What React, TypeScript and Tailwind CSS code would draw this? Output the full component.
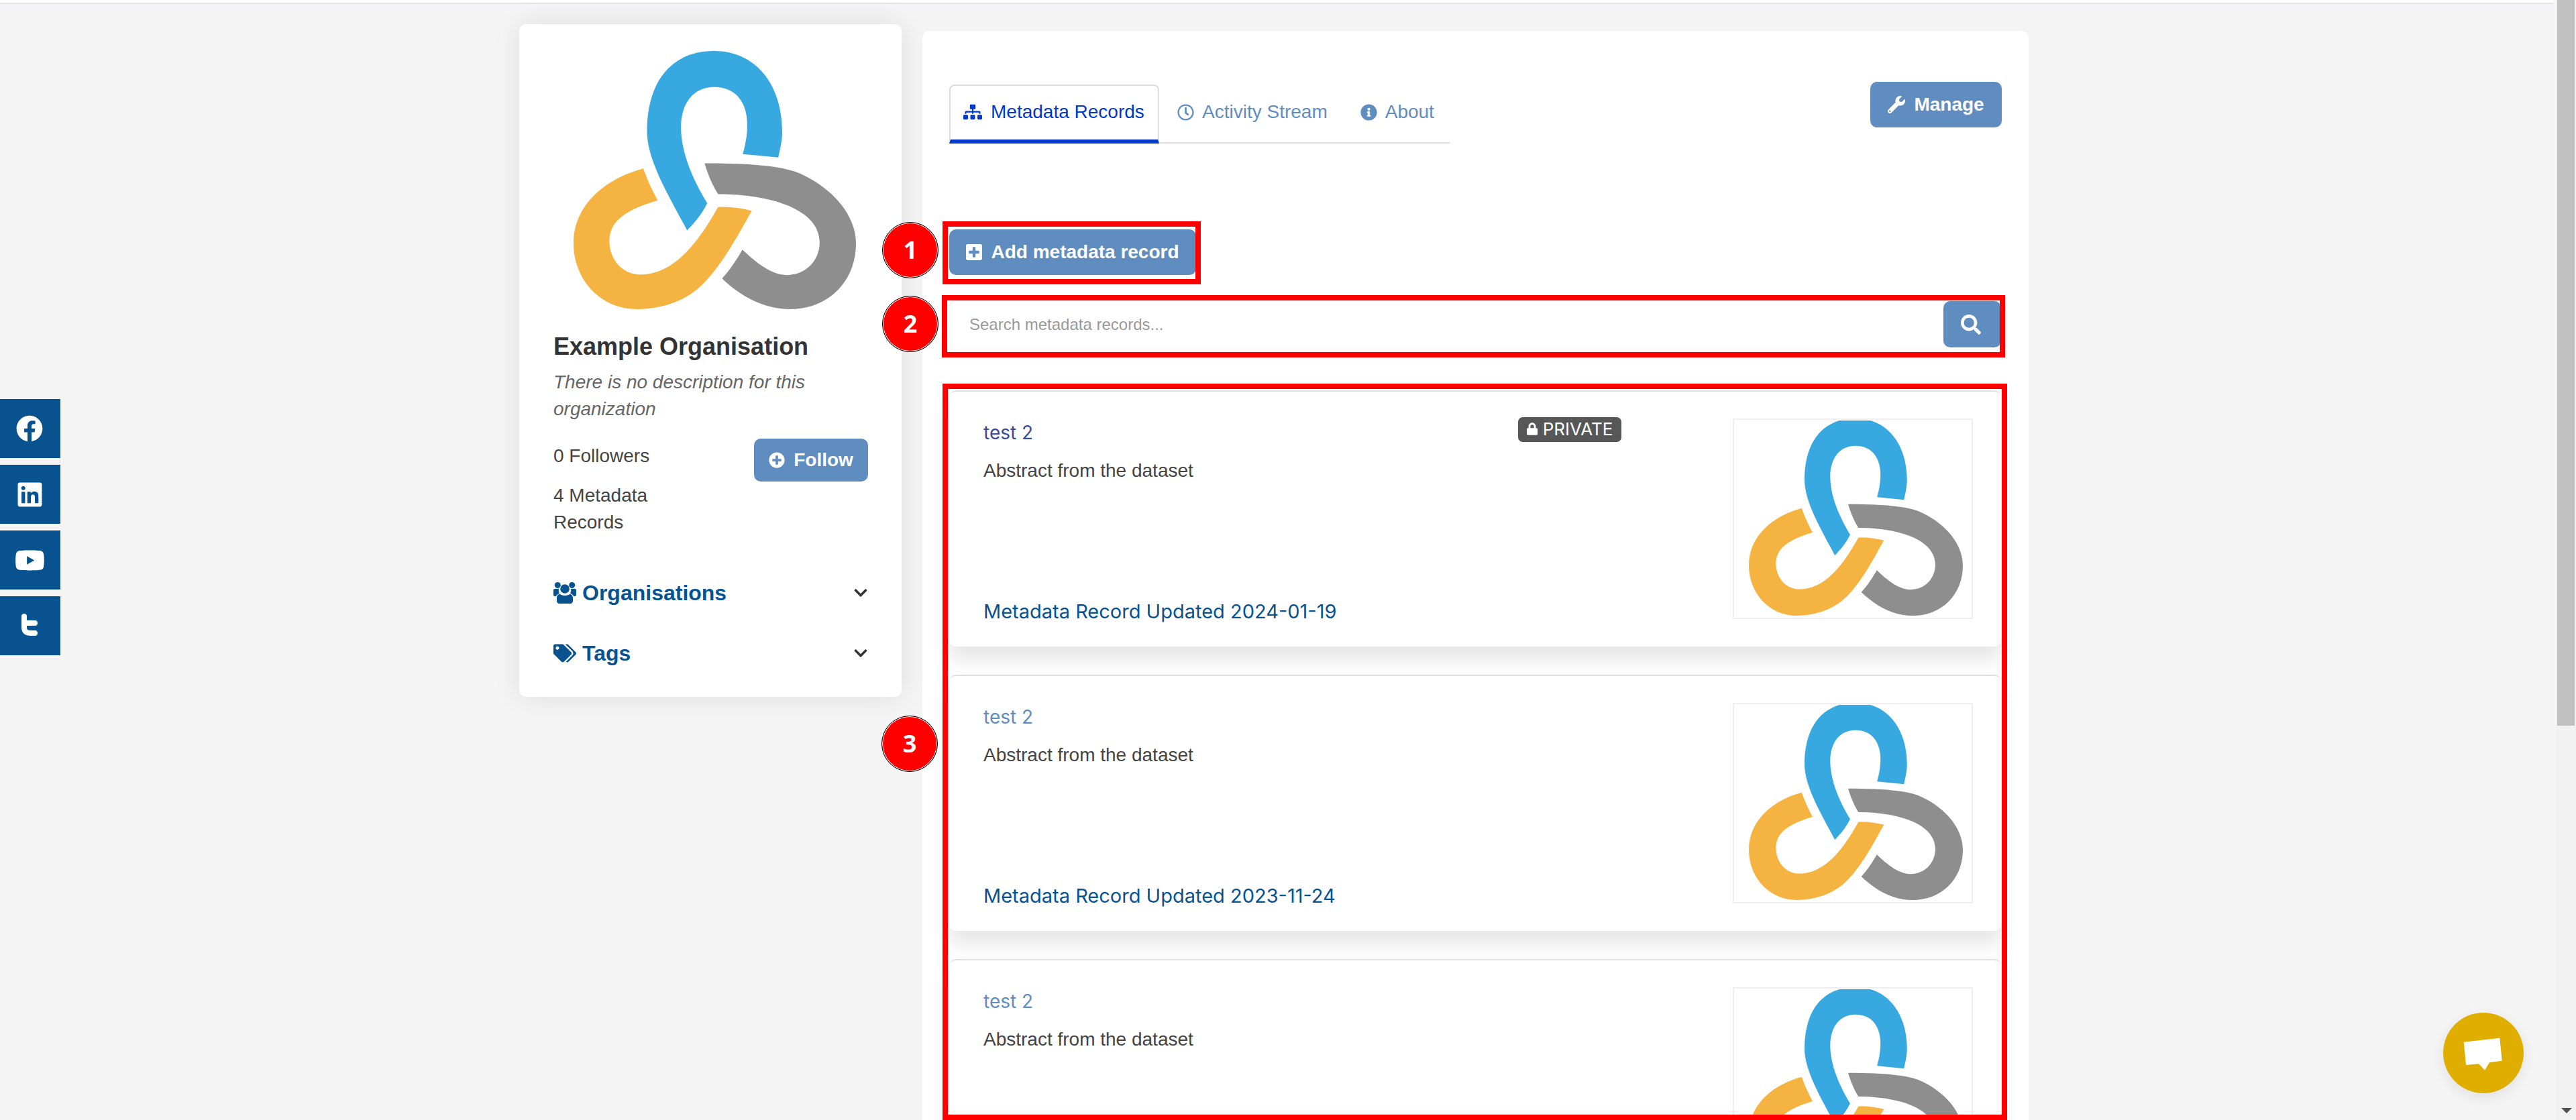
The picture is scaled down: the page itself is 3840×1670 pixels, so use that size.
import { FaChevronDown, FaFacebook, FaInfoCircle, FaLinkedin, FaLock, FaPlusCircle, FaPlusSquare, FaRegClock, FaSearch, FaSitemap, FaTags, FaWrench, FaYoutube } from 'react-icons/fa';

function Logo({ className, viewBox = '240 220 1065 1120' }: { className: string; viewBox?: string }) {
  return (
    <svg className={className} viewBox={viewBox} preserveAspectRatio="none">
      <path fill="#38a9e0" d="M668 998C610 870 517 700 517 570C517 350 610 220 770 220C930 220 1027 370 1027 570C1027 610 1018 650 1012 682L878 667C890 620 895 580 895 540C895 440 850 376 770 376C690 376 645 450 645 550C645 660 690 780 744 880C725 925 700 960 668 998Z" />
      <path fill="#8e8e8e" d="M734 707C860 707 1000 712 1080 745C1200 800 1305 920 1305 1055C1305 1220 1200 1340 1055 1340C960 1340 870 1285 800 1207C830 1170 855 1125 877 1082C925 1135 985 1192 1045 1192C1115 1192 1168 1130 1168 1050C1168 910 990 841 785 841C762 800 745 750 734 707Z" />
      <path fill="#f5b342" d="M503 730C518 780 537 825 557 868C450 905 375 950 375 1045C375 1125 425 1190 490 1190C620 1190 710 1050 785 897C830 895 872 902 912 913C860 1020 790 1170 710 1250C650 1310 560 1340 480 1340C340 1340 240 1210 240 1055C240 880 370 770 503 730Z" />
    </svg>
  );
}

function UsersIcon() {
  return (
    <svg className="h-[32px] w-[34px]" viewBox="0 0 34 32" fill="currentColor">
      <circle cx="6.3" cy="4.5" r="4.5" />
      <circle cx="27.7" cy="4.5" r="4.5" />
      <path d="M0 12C0 10.5 1 10 2.5 10H8C7.5 13 8 15 9 17C6.5 17.5 5 19 4 21H2C.8 21 0 20 0 19ZM34 12C34 10.5 33 10 31.5 10H26C26.500 13 26 15 25 17C27.500 17.500 29 19 30 21H32C33.200 21 34 20 34 19Z" />
      <circle cx="17" cy="10" r="6.800" />
      <path d="M5 24C5 20 7 18 10 18C12 19.500 14.500 20 17 20C19.500 20 22 19.500 24 18C27 18 29 20 29 24V28C29 30.500 27.500 32 25 32H9C6.500 32 5 30.500 5 28Z" />
    </svg>
  );
}

function SocialBar() {
  return (
    <div className="absolute left-0 top-[595px] flex flex-col gap-[10px]">
      <div className="flex h-[88px] w-[90px] items-center justify-center bg-[#08528f] pr-[2px] text-white"><FaFacebook className="h-[40px] w-[40px]" /></div>
      <div className="flex h-[88px] w-[90px] items-center justify-center bg-[#08528f] pr-[2px] text-white"><FaLinkedin className="h-[41px] w-[41px]" /></div>
      <div className="flex h-[88px] w-[90px] items-center justify-center bg-[#08528f] pr-[2px] text-white"><FaYoutube className="h-[45px] w-[45px]" /></div>
      <div className="flex h-[88px] w-[90px] items-center justify-center bg-[#08528f] text-white">
        <svg className="h-[88px] w-[90px]" viewBox="0 0 90 88" fill="none" stroke="currentColor" strokeWidth="8" strokeLinecap="round" strokeLinejoin="round">
          <path d="M36 30V46C36 53 40 55 46 55H52M36 40H52" />
        </svg>
      </div>
    </div>
  );
}

function Sidebar() {
  return (
    <aside className="w-[570px] shrink-0 rounded-[10px] bg-white pb-[45px] pl-[51px] pr-[50px] pt-[40px] shadow-[0_0_40px_rgba(0,0,0,0.09)]">
      <Logo className="ml-[30px] h-[385px] w-[421px]" />
      <h1 className="mt-[34px] text-[36px] font-bold leading-[44px] text-[#333]">Example Organisation</h1>
      <p className="mt-[11px] text-[28px] italic leading-[40px] text-[#666]">There is no description for this organization</p>
      <div className="mt-[24px] flex items-start justify-between">
        <div className="w-[250px] pt-[6px] text-[28px] leading-[40px] text-[#444]">
          <p>0 Followers</p>
          <p className="mt-[19px]">4 Metadata Records</p>
        </div>
        <button className="flex h-[64px] w-[170px] items-center justify-center gap-[13px] rounded-[10px] bg-[#5f8dc0] text-[28px] font-bold text-white">
          <FaPlusCircle className="h-[24px] w-[24px]" />
          Follow
        </button>
      </div>
      <div className="mt-[65px] flex items-center justify-between text-[32px] font-bold leading-[40px] text-[#08528f]">
        <div className="flex items-center gap-[9px]">
          <UsersIcon />
          Organisations
        </div>
        <FaChevronDown className="h-[22px] w-[22px] text-[#333]" />
      </div>
      <div className="mt-[50px] flex items-center justify-between text-[32px] font-bold leading-[40px] text-[#08528f]">
        <div className="flex items-center gap-[9px]">
          <FaTags className="h-[34px] w-[34px]" />
          Tags
        </div>
        <FaChevronDown className="h-[22px] w-[22px] text-[#333]" />
      </div>
    </aside>
  );
}

function Tabs() {
  return (
    <div className="mt-[4px] flex h-[88px] w-[746px] items-stretch border-b-2 border-[#ddd] text-[28px] leading-[40px] text-[#5f8dc0]">
      <div className="-mb-[2px] flex h-[88px] w-[313px] items-center gap-[13px] rounded-t-[8px] border-x-2 border-b-[6px] border-t-2 border-[#ddd] border-b-[#0038c7] pb-[2px] pl-[19px] text-[#0038c7]">
        <FaSitemap className="h-[28px] w-[28px]" />
        Metadata Records
      </div>
      <div className="flex items-center gap-[12px] pb-[4px] pl-[27px] pr-[25px]">
        <FaRegClock className="h-[25px] w-[25px]" />
        Activity Stream
      </div>
      <div className="flex items-center gap-[12px] pb-[4px] pl-[24px]">
        <FaInfoCircle className="h-[25px] w-[25px]" />
        About
      </div>
    </div>
  );
}

function RecordCard({ date, isPrivate }: { date?: string; isPrivate?: boolean }) {
  return (
    <div className="flex h-[382px] shrink-0 items-start rounded-[10px] border-t-2 border-[#e0e0e0] bg-white pl-[51px] pr-[42px] shadow-[0_20px_30px_rgba(0,0,0,0.1)]">
      <div className="flex h-full w-[797px] flex-col pb-[32px] pt-[41px]">
        <a className={`font-['Inter',sans-serif] text-[28px] leading-[40px] ${isPrivate ? 'text-[#3b4a9a]' : 'text-[#5f8dc0]'}`}>test 2</a>
        <p className="mt-[17px] text-[28px] leading-[40px] text-[#444]">Abstract from the dataset</p>
        {date && <p className="mt-auto font-['Inter',sans-serif] text-[29px] leading-[40px] text-[#08528f]">{date}</p>}
      </div>
      {isPrivate && (
        <span className="mt-[38px] flex h-[37px] w-[154px] items-center justify-center gap-[8px] rounded-[7px] bg-[#575757] pb-[3px] font-['Inter',sans-serif] text-[26px] text-white">
          <FaLock className="h-[19px] w-[16px]" />
          PRIVATE
        </span>
      )}
      <div className="ml-auto mt-[40px] flex h-[299px] w-[358px] shrink-0 items-start overflow-hidden border-2 border-[#eee] pl-[22px] pt-[1px]">
        <Logo className="h-[291px] w-[319px]" viewBox="240 232 1065 1108" />
      </div>
    </div>
  );
}

function MainPanel() {
  return (
    <main className="mt-[10px] h-[1700px] w-[1649px] shrink-0 rounded-[10px] bg-white px-[40px] pt-[76px]">
      <div className="flex items-start justify-between">
        <Tabs />
        <button className="flex h-[68px] w-[196px] items-center justify-center gap-[13px] rounded-[10px] bg-[#5f8dc0] text-[28px] font-bold text-white">
          <FaWrench className="h-[26px] w-[26px]" />
          Manage
        </button>
      </div>
      <button className="mt-[128px] flex h-[68px] w-[368px] items-center justify-center gap-[13px] rounded-[10px] bg-[#5f8dc0] text-[28px] font-bold text-white">
        <FaPlusSquare className="h-[28px] w-[24px]" />
        Add metadata record
      </button>
      <div className="mt-[39px] flex h-[69px] w-[1568px] rounded-[10px] shadow-[0_-1px_3px_rgba(0,0,0,0.1)]">
        <input className="flex-1 bg-transparent pl-[30px] text-[24px] outline-none placeholder:text-[#999]" placeholder="Search metadata records..." />
        <button className="flex w-[86px] items-center justify-center rounded-[10px] bg-[#5f8dc0] pr-[4px] text-white">
          <FaSearch className="h-[30px] w-[30px]" />
        </button>
      </div>
      <div className="mt-[64px] flex w-[1568px] flex-col gap-[42px]">
        <RecordCard date="Metadata Record Updated 2024-01-19" isPrivate />
        <RecordCard date="Metadata Record Updated 2023-11-24" />
        <RecordCard />
      </div>
    </main>
  );
}

function Annotations() {
  return (
    <>
      <div className="absolute left-[1405px] top-[330px] h-[94px] w-[385px] border-8 border-[#f00]" />
      <div className="absolute left-[1404px] top-[440px] h-[93px] w-[1585px] border-8 border-[#f00]" />
      <div className="absolute left-[1405px] top-[572px] h-[1098px] w-[1587px] border-8 border-[#f00]" />
      <div className="absolute left-[1315px] top-[331px] flex h-[84px] w-[84px] items-center justify-center rounded-full border border-black bg-[#f00] font-['Open_Sans',sans-serif] text-[36px] font-bold text-white shadow-[inset_0_0_0_1px_white]">1</div>
      <div className="absolute left-[1315px] top-[441px] flex h-[84px] w-[84px] items-center justify-center rounded-full border border-black bg-[#f00] font-['Open_Sans',sans-serif] text-[36px] font-bold text-white shadow-[inset_0_0_0_1px_white]">2</div>
      <div className="absolute left-[1314px] top-[1067px] flex h-[84px] w-[84px] items-center justify-center rounded-full border border-black bg-[#f00] font-['Open_Sans',sans-serif] text-[36px] font-bold text-white shadow-[inset_0_0_0_1px_white]">3</div>
    </>
  );
}

export default function App() {
  return (
    <div className="relative h-[1670px] w-[3840px] overflow-hidden bg-[#f4f4f4] font-['Liberation_Sans',sans-serif]">
      <div className="mr-[33px] h-[6px] border-b-2 border-[#e2e5e9] bg-white" />
      <div className="flex items-start gap-[31px] pl-[774px] pt-[30px]">
        <Sidebar />
        <MainPanel />
      </div>
      <SocialBar />
      <Annotations />
      {/* chat bubble */}
      <div className="absolute left-[3642px] top-[1510px] h-[120px] w-[120px] rounded-full bg-[#e0ae00] shadow-[0_6px_20px_rgba(0,0,0,0.08)]">
        <svg className="h-[120px] w-[120px]" viewBox="0 0 120 120">
          <path fill="white" d="M30.7 43.7L84.3 37.7L87.700 71.700L69.300 74L62 85.700L53 76.300L34 78Z" />
        </svg>
      </div>
      {/* page scrollbar */}
      <div className="absolute bottom-0 right-0 top-0 w-[30px] bg-[#f1f1f1]">
        <div className="ml-[2px] h-[1082px] w-[26px] bg-[#c1c1c1]" />
        <svg className="absolute bottom-[10px] left-[8px] h-[8px] w-[16px]" viewBox="0 0 16 8">
          <path fill="#505050" d="M0 0H16L8 8Z" />
        </svg>
      </div>
    </div>
  );
}
